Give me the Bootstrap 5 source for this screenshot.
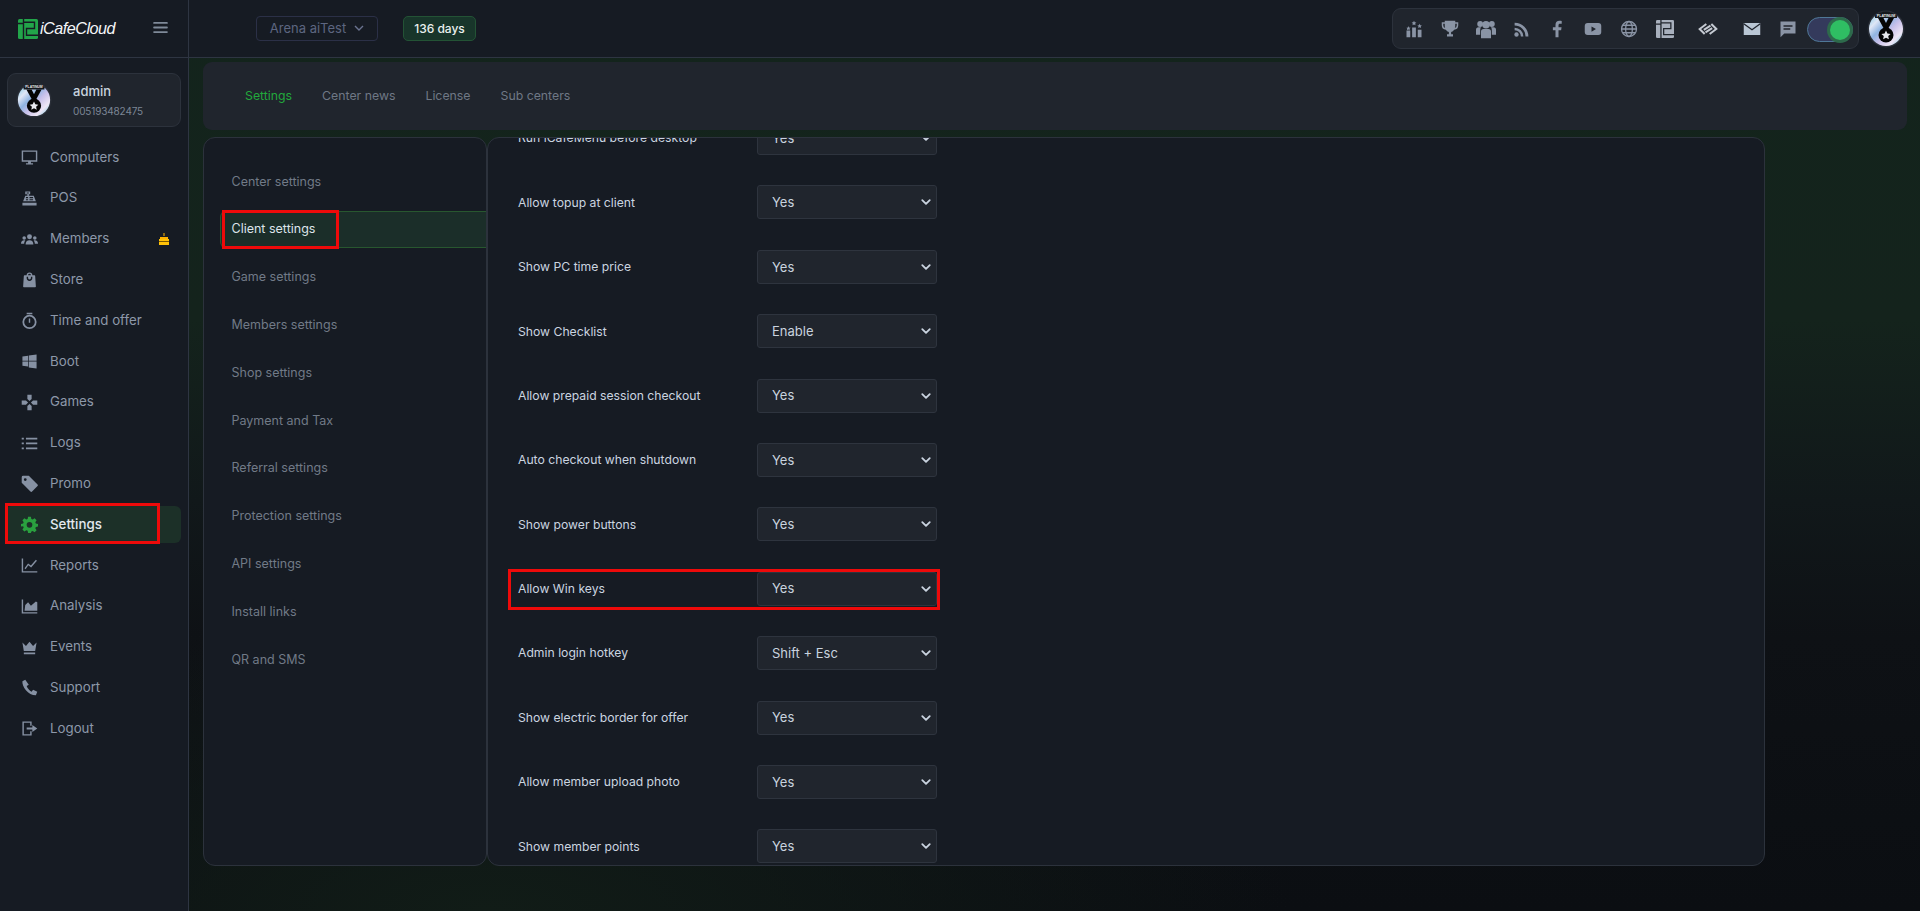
<!DOCTYPE html>
<html lang="en" data-bs-theme="dark">
<head>
  <meta charset="UTF-8" />
  <meta name="viewport" content="width=device-width, initial-scale=1.0" />
  <title>Settings | iCafeCloud</title>
  <link href="https://cdn.jsdelivr.net/npm/bootstrap@5.3.3/dist/css/bootstrap.min.css" rel="stylesheet" />
  <style>
    html, body { height: 100%; }
    body {
      background: #0c0f14;
      color: #c9d3df;
      font-family: Inter, "Liberation Sans", sans-serif;
      font-size: 12.5px;
      overflow: hidden;
    }
    .app-shell { height: 911px; }
    .side-col {
      width: 189px;
      background: #161b23;
      border-right: 1px solid #2e3542;
    }
    .brand-cell { height: 58px; padding: 0 20px 0 18px; border-bottom: 1px solid #2e3542; }
    .brand-name { color: #f4f6f8; font-size: 16.2px; font-style: italic; letter-spacing: -.5px; font-family: "Liberation Sans", sans-serif; margin-left: 2px; }
    .burger { width: 15px; height: 11px; margin-top: -3px; color: #7f8a99; }
    .logo-mark { color: #22a54a; --cut: #161b23; }
    .profile-box {
      margin: 15px 7px 12px;
      height: 54px;
      padding: 0 8px;
      background: #20252d;
      border: 1px solid #2c323c;
      border-radius: 9px;
    }
    .profile-box .who { margin-left: 21px; line-height: 1; }
    .who-name { color: #c9d3df; font-size: 13px; font-weight: 500; }
    .who-phone { color: #7c8695; font-size: 10px; letter-spacing: -.15px; margin-top: 8px; }
    .side-nav { padding: 0 7px 0 5px; gap: 3.8px; }
    .side-link {
      position: relative;
      height: 37px;
      padding-left: 16px;
      gap: 12px;
      color: #8d98a9;
      font-size: 13.3px;
      text-decoration: none;
      border-radius: 6px;
    }
    .side-link svg.ico { width: 17px; height: 17px; flex: none; fill: #8691a3; }
    .side-link.on { background: #1c3028; color: #e3e9ef; font-weight: 500; }
    .side-link.on svg.ico { fill: #2aa03f; }
    .cake { position: absolute; right: 11px; top: 12px; width: 12px; height: 12px; }
    .mark-box { position: absolute; border: 3px solid #ee0a0a; pointer-events: none; }
    .mark-side { left: 0; top: -3px; width: 155px; height: 41px; }
    .mark-tab { left: 1px; top: -2px; width: 117px; height: 39px; }
    .mark-row { left: -9px; top: -3px; width: 432px; height: 41px; }

    .main-col {
      background:
        radial-gradient(ellipse 800px 300px at 300px 100%, #111c17 0%, rgba(17, 28, 23, 0) 100%),
        linear-gradient(180deg, #13241c 0%, #14231c 35%, #11181a 55%, #0e1115 70%, #0b0e12 100%);
    }
    .top-strip { height: 58px; padding: 0 15px 0 67px; background: #161b23; border-bottom: 1px solid #2e3542; }
    .center-pick {
      width: 122px; height: 25px;
      color: #5d6680; font-size: 13px;
      border: 1px solid #2b3047; border-radius: 4px;
      gap: 8px;
    }
    .days-pill {
      width: 73px; height: 25px; margin-left: 25px;
      background: #18352a; border: 1px solid #235335; border-radius: 5px;
      color: #eaf0ee; font-size: 12px; font-weight: 500;
    }
    .tool-box {
      width: 467px; height: 41px;
      background: #20252d; border: 1px solid #2c323c; border-radius: 9px;
      position: relative;
      --cut: #20252d;
    }
    .tool-ico { position: absolute; top: 50%; width: 18px; height: 18px; margin: -9px 0 0 -9px; fill: #8a94a5; }
    .mode-switch {
      position: absolute; left: 414px; top: 8px; width: 46px; height: 25px;
      background: #343a5c; border: 1px solid #4f7797; border-radius: 13px;
    }
    .mode-switch span {
      position: absolute; right: 2px; top: 1.5px; width: 20px; height: 20px;
      background: #2fbe63; border-radius: 50%; box-shadow: 0 0 0 3px #2d6a4b;
    }
    .top-avatar { width: 38px; height: 38px; margin-left: 8px; }

    .tabs-box {
      height: 68px;
      margin: 4px 13px 7px 14px;
      padding-left: 42px;
      background: #20252d;
      border-radius: 9px;
    }
    .tabs-box a { color: #6f7885; font-size: 12.3px; text-decoration: none; margin-right: 30px; }
    .tabs-box a.on { color: #22a83c; }

    .panels { height: 729px; margin-left: 14px; width: 1562px; }
    .menu-panel {
      width: 284px;
      padding-top: 25.5px;
      background: #161b23;
      border: 1px solid #2c323c;
      border-radius: 12px;
      gap: 10.8px;
    }
    .menu-link {
      position: relative;
      height: 37px; margin-left: 16px; padding-left: 10.5px;
      color: #717a87; font-size: 12.5px; text-decoration: none;
      border: 1px solid transparent;
      border-right: 0;
    }
    .menu-link.on {
      color: #dde4ea;
      background: #1b2e29;
      border-color: #28572f;
      border-radius: 6px 0 0 6px;
    }
    .form-panel {
      width: 1278px;
      background: #161b23;
      border: 1px solid #2c323c;
      border-radius: 12px;
      overflow: hidden;
    }
    .form-list { margin-top: -17px; padding-left: 29px; gap: 30.4px; }
    .form-line { position: relative; height: 34px; }
    .form-line label { width: 240px; color: #cbd5e0; font-size: 12.2px; margin: 0; padding: 1px 0 0 1px; }
    .pick-box {
      width: 180px; height: 34px;
      padding: 1px 28px 0 14px;
      color: #c9d3df; font-size: 13px;
      background-color: #20252d;
      background-image: url("data:image/svg+xml,%3csvg xmlns='http://www.w3.org/2000/svg' viewBox='0 0 16 16'%3e%3cpath fill='none' stroke='%23c9d3df' stroke-linecap='round' stroke-linejoin='round' stroke-width='2.4' d='m3 5.5 5 5 5-5'/%3e%3c/svg%3e");
      background-position: right 4px center;
      background-size: 12px 12px;
      border: 1px solid #2e343e;
      border-radius: 3px;
    }
  </style>
</head>
<body>

<svg width="0" height="0" class="position-absolute">
  <defs>
    <linearGradient id="holo" x1="0" y1="0" x2="1" y2="1">
      <stop offset="0" stop-color="#6fc4e4" />
      <stop offset=".25" stop-color="#dfe6f5" />
      <stop offset=".42" stop-color="#8fb4e2" />
      <stop offset=".58" stop-color="#c8c0ea" />
      <stop offset=".78" stop-color="#eee6f6" />
      <stop offset="1" stop-color="#6cc6de" />
    </linearGradient>
    <symbol id="medal" viewBox="0 0 38 38">
      <circle cx="19" cy="19" r="18.500" fill="#2a2f38" />
      <circle cx="19" cy="19" r="17" fill="url(#holo)" />
      <path d="M8 5.500a17 17 0 0 1 22 0V8H8z" fill="#15181d" />
      <text x="19" y="6.500" text-anchor="middle" font-size="3.600" font-weight="700" fill="#e8e8e8" font-family="Liberation Sans, sans-serif">PLATINUM</text>
      <path d="M11 8h5.500l2.500 5 2.500-5H27l-5.500 10h-5z" fill="#050505" />
      <circle cx="19" cy="25" r="7.500" fill="#050505" />
      <path d="m19 20.500 1.400 3 3.200.4-2.400 2.200.7 3.200-2.900-1.600-2.900 1.600.7-3.200-2.400-2.200 3.200-.4z" fill="#e8eaee" />
    </symbol>
    <symbol id="i2mark" viewBox="0 0 20 20">
      <rect width="20" height="20" rx="1.500" fill="currentColor" />
      <path fill="none" stroke="var(--cut)" stroke-width="1.400" d="M5.500 0v20M0 4.500h5.500M5.500 3.200h11v6.300H8.500v6.700H20" />
    </symbol>
  </defs>
</svg>

<div class="app-shell d-flex">

  <aside class="side-col flex-shrink-0 d-flex flex-column">
    <div class="brand-cell d-flex align-items-center">
      <svg width="20" height="20" class="logo-mark flex-shrink-0"><use href="#i2mark" /></svg>
      <span class="brand-name">iCafeCloud</span>
      <svg class="burger ms-auto" viewBox="0 0 16 12" fill="currentColor"><rect width="16" height="2" rx="1" /><rect y="5" width="16" height="2" rx="1" /><rect y="10" width="16" height="2" rx="1" /></svg>
    </div>

    <div class="profile-box d-flex align-items-center">
      <svg width="36" height="36"><use href="#medal" /></svg>
      <div class="who">
        <div class="who-name">admin</div>
        <div class="who-phone">005193482475</div>
      </div>
    </div>

    <nav class="side-nav d-flex flex-column">
      <a href="#" class="side-link d-flex align-items-center">
        <svg class="ico" viewBox="0 0 24 24"><path d="M1 2h22v16H14v2h3v2H7v-2h3v-2H1zm2 2v12h18V4z" fill-rule="evenodd" /></svg>Computers
      </a>
      <a href="#" class="side-link d-flex align-items-center">
        <svg class="ico" viewBox="0 0 24 24"><path fill-rule="evenodd" d="M6 2h7v4h-2v2h7l3 8H3l3-8h3V6H6zm2 1.500V5h3V3.500zM7 10v1.500h3V10zm0 3v1.500h3V13zm5-3v1.500h5V10zm0 3v1.500h5V13zM2 18h20v4H2z" /></svg>POS
      </a>
      <a href="#" class="side-link d-flex align-items-center">
        <svg class="ico" viewBox="0 0 24 24"><circle cx="12" cy="8" r="3.500" /><circle cx="4.500" cy="10" r="2.500" /><circle cx="19.500" cy="10" r="2.500" /><path d="M6.500 19c0-4 2-6 5.500-6s5.500 2 5.500 6zM0 18c0-3 1.500-5 4.500-5 .6 0 1.200.1 1.600.3C5 14.500 4.500 16 4.500 18zM24 18c0-3-1.500-5-4.500-5-.6 0-1.200.1-1.600.3 1.100 1.200 1.600 2.700 1.600 4.700z" /></svg>Members
        <svg class="cake" viewBox="0 0 12 12"><path d="M5.500 0h1v3h-1z" fill="#ffb300" /><path d="M2 4h8v2H2z" fill="#ffb300" /><path d="M1 6h10v6H1z" fill="#ffc107" /><path d="M1 8h10v1H1z" fill="#7a5600" /></svg>
      </a>
      <a href="#" class="side-link d-flex align-items-center">
        <svg class="ico" viewBox="0 0 24 24"><path fill-rule="evenodd" d="M8 6a4 4 0 0 1 8 0h3a1 1 0 0 1 1 1l1 15a1 1 0 0 1-1 1H4a1 1 0 0 1-1-1L4 7a1 1 0 0 1 1-1zm2 0h4a2 2 0 0 0-4 0m-2 2v2a4 4 0 0 0 8 0V8h-2v2a2 2 0 0 1-4 0V8z" /></svg>Store
      </a>
      <a href="#" class="side-link d-flex align-items-center">
        <svg class="ico" viewBox="0 0 24 24"><path fill-rule="evenodd" d="M8 1h8v2H8zM12 4a10 10 0 1 1 0 20 10 10 0 0 1 0-20m0 2.500a7.500 7.500 0 1 0 0 15 7.500 7.500 0 0 0 0-15M11 9h2v6h-2z" /></svg>Time and offer
      </a>
      <a href="#" class="side-link d-flex align-items-center">
        <svg class="ico" viewBox="0 0 24 24"><path d="M2 5l8-1.200V11H2zM11 3.600 22 2v9H11zM2 12h8v7.200L2 18zM11 12h11v10l-11-1.600z" /></svg>Boot
      </a>
      <a href="#" class="side-link d-flex align-items-center">
        <svg class="ico" viewBox="0 0 24 24"><path d="M9 1h6v6l-3 3-3-3zM9 23h6v-6l-3-3-3 3zM1 9v6h6l3-3-3-3zM23 9v6h-6l-3-3 3-3z" /></svg>Games
      </a>
      <a href="#" class="side-link d-flex align-items-center">
        <svg class="ico" viewBox="0 0 24 24"><path d="M1 4h3v2.500H1zM7 4h16v2.500H7zM1 10.700h3v2.500H1zM7 10.700h16v2.500H7zM1 17.500h3V20H1zM7 17.500h16V20H7z" /></svg>Logs
      </a>
      <a href="#" class="side-link d-flex align-items-center">
        <svg class="ico" viewBox="0 0 24 24"><path fill-rule="evenodd" d="M1 3a2 2 0 0 1 2-2h8l12 12a2 2 0 0 1 0 3l-7 7a2 2 0 0 1-3 0L1 11zm5 1.500a2 2 0 1 0 0 4 2 2 0 0 0 0-4" /></svg>Promo
      </a>
      <a href="#" class="side-link on d-flex align-items-center">
        <svg class="ico" viewBox="0 0 24 24"><path fill-rule="evenodd" d="M10 1h4l.6 3.200 1.900.8 2.700-1.800 2.800 2.800-1.800 2.700.8 1.900L24 11.200v3.600l-3 .6-.8 1.900 1.800 2.700-2.800 2.800-2.700-1.800-1.900.8L14 24h-4l-.6-3.200-1.900-.8-2.700 1.800L2 19l1.800-2.700-.8-1.900L0 14.800v-3.600l3-.6.8-1.900L2 6l2.800-2.800 2.700 1.800 1.900-.8zm2 7.500a4 4 0 1 0 0 8 4 4 0 0 0 0-8" /></svg>Settings
        <span class="mark-box mark-side"></span>
      </a>
      <a href="#" class="side-link d-flex align-items-center">
        <svg class="ico" viewBox="0 0 24 24"><path d="M1 2h2v18h20v2H1z" /><path d="m5 16 5-7 4 3 7-8 1.500 1.300-8.200 9.400-4-3-3.800 5.500z" /></svg>Reports
      </a>
      <a href="#" class="side-link d-flex align-items-center">
        <svg class="ico" viewBox="0 0 24 24"><path d="M1 2h2v18h20v2H1z" /><path d="m5 18 1-8 4-4 4 5 7-6 2 1v12z" /></svg>Analysis
      </a>
      <a href="#" class="side-link d-flex align-items-center">
        <svg class="ico" viewBox="0 0 24 24"><path d="M2 5l5 5 5-6 5 6 5-5-2 12H4zM4 19h16v2.500H4z" /></svg>Events
      </a>
      <a href="#" class="side-link d-flex align-items-center">
        <svg class="ico" viewBox="0 0 24 24"><path d="M6 1 2 3c-1 7 8 20 19 20l2-5-6-3-2 3c-3-1-6-5-7-8l3-2z" /></svg>Support
      </a>
      <a href="#" class="side-link d-flex align-items-center">
        <svg class="ico" viewBox="0 0 24 24"><path d="M2 2h13v6h-2V4H4v16h9v-4h2v6H2z" /><path d="M8 10.500h8V7l7 5-7 5v-3.500H8z" /></svg>Logout
      </a>
    </nav>
  </aside>

  <div class="main-col flex-grow-1 d-flex flex-column">
    <header class="top-strip d-flex align-items-center">
      <div class="center-pick d-flex align-items-center justify-content-center">Arena aiTest
        <svg width="10" height="7" viewBox="0 0 10 7" fill="none" stroke="#6a7390" stroke-width="1.400"><path d="m1 1 4 4 4-4" /></svg>
      </div>
      <div class="days-pill d-flex align-items-center justify-content-center">136 days</div>

      <div class="tool-box ms-auto">
        <svg class="tool-ico" style="left:21px" viewBox="0 0 24 24"><path d="M2 14h5v9H2zM9.500 10h5v13h-5zM17 13h5v10h-5zM4.500 8l1 2 2 .2-1.500 1.400.4 2-1.900-1-1.900 1 .4-2L2 10.200 4 10zM12 1l1 2 2.200.3-1.600 1.500.4 2.200-2-1-2 1 .4-2.200-1.600-1.500L11 3zM19.500 5l1 2 2 .2-1.500 1.400.4 2-1.900-1-1.900 1 .4-2-1.500-1.400 2-.2z" /></svg>
        <svg class="tool-ico" style="left:57px" viewBox="0 0 24 24"><path fill-rule="evenodd" d="M5 1h14v2h4v4a6 6 0 0 1-5.500 6 6 6 0 0 1-4 3v3H16v3H8v-3h2.500v-3a6 6 0 0 1-4-3A6 6 0 0 1 1 7V3h4zM3 5v2a4 4 0 0 0 2.500 3.700A10 10 0 0 1 5 8V5zm16 0v3a10 10 0 0 1-.5 2.700A4 4 0 0 0 21 7V5z" /></svg>
        <svg class="tool-ico" style="left:93px;width:20px;height:20px;margin:-10px 0 0 -10px" viewBox="0 0 24 24"><circle cx="5" cy="6" r="3.500" /><circle cx="19" cy="6" r="3.500" /><circle cx="12" cy="7" r="4.500" /><path d="M0 19v-6a3 3 0 0 1 3-3h3a7 7 0 0 0-1 4v5zM24 19v-6a3 3 0 0 0-3-3h-3a7 7 0 0 1 1 4v5zM6 23v-8a3 3 0 0 1 3-3h6a3 3 0 0 1 3 3v8z" /></svg>
        <svg class="tool-ico" style="left:128px;width:15px;height:15px;margin:-7px 0 0 -7px" viewBox="0 0 24 24"><circle cx="4" cy="20" r="3.500" /><path d="M1 9v4a10 10 0 0 1 10 10h4A14 14 0 0 0 1 9" /><path d="M1 1v4.500A17.500 17.500 0 0 1 18.500 23H23A22 22 0 0 0 1 1" /></svg>
        <svg class="tool-ico" style="left:164px" viewBox="0 0 24 24"><path d="M14 23V13.500h3.500l.6-4H14V7c0-1.200.5-2 2-2h2.300V1.300C17.700 1.200 16.500 1 15.300 1 12 1 10 3 10 6.500v3H6.500v4H10V23z" /></svg>
        <svg class="tool-ico" style="left:200px" viewBox="0 0 24 24"><path fill-rule="evenodd" d="M5 4h14a4 4 0 0 1 4 4v8a4 4 0 0 1-4 4H5a4 4 0 0 1-4-4V8a4 4 0 0 1 4-4m5 4.500v7l6-3.500z" /></svg>
        <svg class="tool-ico" style="left:236px" viewBox="0 0 24 24" fill="none" stroke="#8a94a5" stroke-width="1.700"><circle cx="12" cy="12" r="10" fill="none" /><ellipse cx="12" cy="12" rx="4.500" ry="10" fill="none" /><path d="M2 12h20M3.300 7h17.400M3.300 17h17.400" fill="none" /></svg>
        <svg class="tool-ico" style="left:272px;color:#a8b0bd"><use href="#i2mark" /></svg>
        <svg class="tool-ico" style="left:315px;width:20px;height:12px;margin:-6px 0 0 -10px" viewBox="0 0 24 14" fill="none" stroke="#c5cad2" stroke-width="2.400"><path fill="none" d="M10 1 2 7l6 6M14 13l8-6-6-6M15 3 7 8M17 6l-8 5" /></svg>
        <svg class="tool-ico" style="left:359px" viewBox="0 0 24 24"><path fill="#b9c6d4" d="M1 4h22v16H1z" /><path fill="none" stroke="#20252d" stroke-width="1.800" d="m1 5 11 8 11-8" /></svg>
        <svg class="tool-ico" style="left:395px" viewBox="0 0 24 24"><path fill="#8a94a5" d="M2 2h20v16H7l-5 5zm4 5v2h12V7zm0 4v2h9v-2z" fill-rule="evenodd" /></svg>
        <div class="mode-switch"><span></span></div>
      </div>
      <svg class="top-avatar flex-shrink-0"><use href="#medal" /></svg>
    </header>

    <div class="tabs-box d-flex align-items-center">
      <a href="#" class="on">Settings</a>
      <a href="#">Center news</a>
      <a href="#">License</a>
      <a href="#">Sub centers</a>
    </div>

    <div class="panels d-flex">
      <div class="menu-panel d-flex flex-column flex-shrink-0">
        <a href="#" class="menu-link d-flex align-items-center">Center settings</a>
        <a href="#" class="menu-link on d-flex align-items-center">Client settings<span class="mark-box mark-tab"></span></a>
        <a href="#" class="menu-link d-flex align-items-center">Game settings</a>
        <a href="#" class="menu-link d-flex align-items-center">Members settings</a>
        <a href="#" class="menu-link d-flex align-items-center">Shop settings</a>
        <a href="#" class="menu-link d-flex align-items-center">Payment and Tax</a>
        <a href="#" class="menu-link d-flex align-items-center">Referral settings</a>
        <a href="#" class="menu-link d-flex align-items-center">Protection settings</a>
        <a href="#" class="menu-link d-flex align-items-center">API settings</a>
        <a href="#" class="menu-link d-flex align-items-center">Install links</a>
        <a href="#" class="menu-link d-flex align-items-center">QR and SMS</a>
      </div>

      <div class="form-panel flex-shrink-0">
        <div class="form-list d-flex flex-column">
          <div class="form-line d-flex align-items-center"><label>Run iCafeMenu before desktop</label><select class="form-select pick-box"><option>Yes</option><option>No</option></select></div>
          <div class="form-line d-flex align-items-center"><label>Allow topup at client</label><select class="form-select pick-box"><option>Yes</option><option>No</option></select></div>
          <div class="form-line d-flex align-items-center"><label>Show PC time price</label><select class="form-select pick-box"><option>Yes</option><option>No</option></select></div>
          <div class="form-line d-flex align-items-center"><label>Show Checklist</label><select class="form-select pick-box"><option>Enable</option><option>Disable</option></select></div>
          <div class="form-line d-flex align-items-center"><label>Allow prepaid session checkout</label><select class="form-select pick-box"><option>Yes</option><option>No</option></select></div>
          <div class="form-line d-flex align-items-center"><label>Auto checkout when shutdown</label><select class="form-select pick-box"><option>Yes</option><option>No</option></select></div>
          <div class="form-line d-flex align-items-center"><label>Show power buttons</label><select class="form-select pick-box"><option>Yes</option><option>No</option></select></div>
          <div class="form-line d-flex align-items-center"><label>Allow Win keys</label><select class="form-select pick-box"><option>Yes</option><option>No</option></select><span class="mark-box mark-row"></span></div>
          <div class="form-line d-flex align-items-center"><label>Admin login hotkey</label><select class="form-select pick-box"><option>Shift + Esc</option></select></div>
          <div class="form-line d-flex align-items-center"><label>Show electric border for offer</label><select class="form-select pick-box"><option>Yes</option><option>No</option></select></div>
          <div class="form-line d-flex align-items-center"><label>Allow member upload photo</label><select class="form-select pick-box"><option>Yes</option><option>No</option></select></div>
          <div class="form-line d-flex align-items-center"><label>Show member points</label><select class="form-select pick-box"><option>Yes</option><option>No</option></select></div>
        </div>
      </div>
    </div>
  </div>
</div>

<script src="https://cdn.jsdelivr.net/npm/bootstrap@5.3.3/dist/js/bootstrap.bundle.min.js"></script>
</body>
</html>
